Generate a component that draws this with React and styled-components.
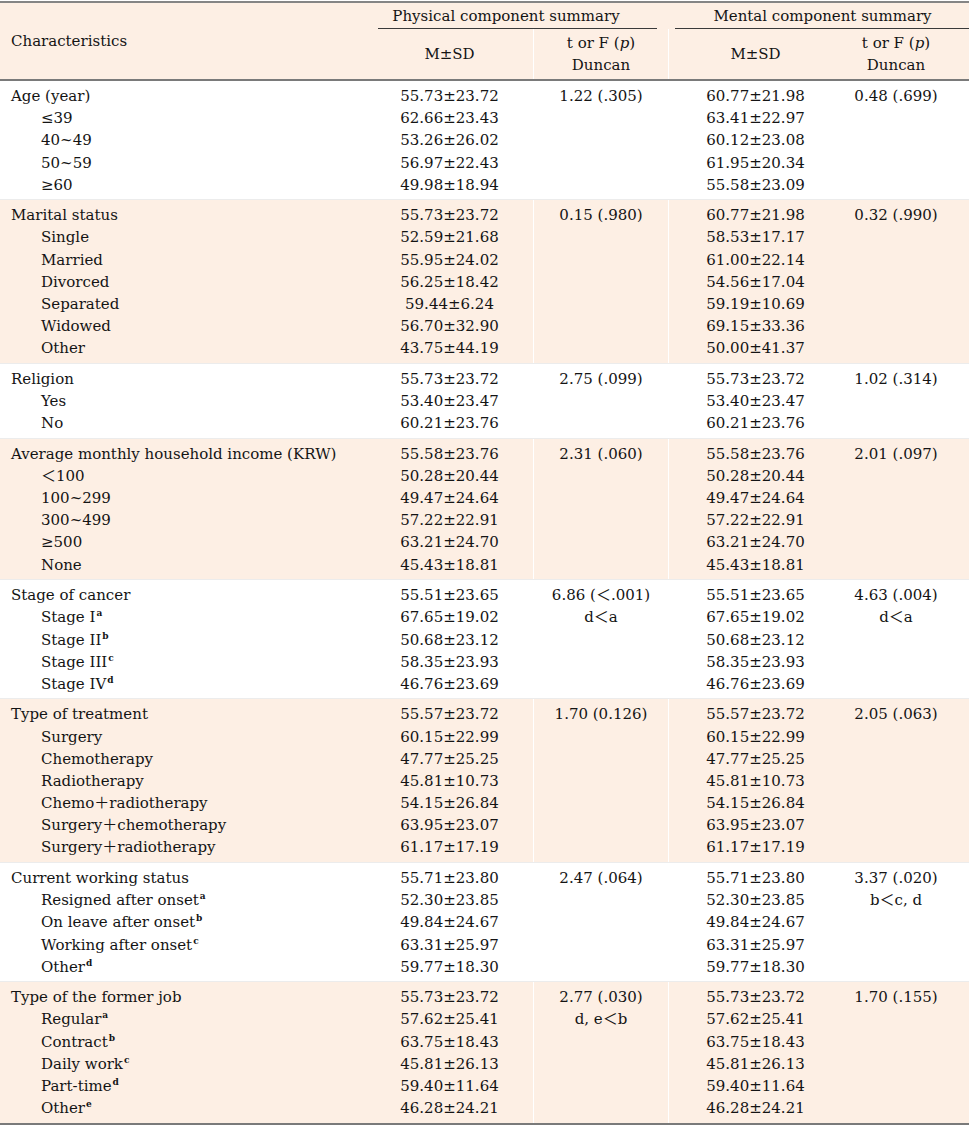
import React from 'react';
import styled, { createGlobalStyle } from "styled-components";

const GlobalStyle = createGlobalStyle`
  body {
    margin: 0;
    background: #ffffff;
    font-family: "DejaVu Serif", "Noto Sans CJK KR", serif;
  }
`

const COLS = '366px 167px 135px 174px 1fr';

const groups = [
  {
    label: 'Age (year)', stats: ['55.73±23.72', '1.22 (.305)', '60.77±21.98', '0.48 (.699)'],
    rows: [
      ['≤39', '62.66±23.43', '', '63.41±22.97', ''],
      ['40~49', '53.26±26.02', '', '60.12±23.08', ''],
      ['50~59', '56.97±22.43', '', '61.95±20.34', ''],
      ['≥60', '49.98±18.94', '', '55.58±23.09', ''],
    ],
  },
  {
    label: 'Marital status', stats: ['55.73±23.72', '0.15 (.980)', '60.77±21.98', '0.32 (.990)'],
    rows: [
      ['Single', '52.59±21.68', '', '58.53±17.17', ''],
      ['Married', '55.95±24.02', '', '61.00±22.14', ''],
      ['Divorced', '56.25±18.42', '', '54.56±17.04', ''],
      ['Separated', '59.44±6.24', '', '59.19±10.69', ''],
      ['Widowed', '56.70±32.90', '', '69.15±33.36', ''],
      ['Other', '43.75±44.19', '', '50.00±41.37', ''],
    ],
  },
  {
    label: 'Religion', stats: ['55.73±23.72', '2.75 (.099)', '55.73±23.72', '1.02 (.314)'],
    rows: [
      ['Yes', '53.40±23.47', '', '53.40±23.47', ''],
      ['No', '60.21±23.76', '', '60.21±23.76', ''],
    ],
  },
  {
    label: 'Average monthly household income (KRW)', stats: ['55.58±23.76', '2.31 (.060)', '55.58±23.76', '2.01 (.097)'],
    rows: [
      ['＜100', '50.28±20.44', '', '50.28±20.44', ''],
      ['100~299', '49.47±24.64', '', '49.47±24.64', ''],
      ['300~499', '57.22±22.91', '', '57.22±22.91', ''],
      ['≥500', '63.21±24.70', '', '63.21±24.70', ''],
      ['None', '45.43±18.81', '', '45.43±18.81', ''],
    ],
  },
  {
    label: 'Stage of cancer', stats: ['55.51±23.65', '6.86 (＜.001)', '55.51±23.65', '4.63 (.004)'],
    rows: [
      ['Stage I', '67.65±19.02', 'd＜a', '67.65±19.02', 'd＜a', 'a'],
      ['Stage II', '50.68±23.12', '', '50.68±23.12', '', 'b'],
      ['Stage III', '58.35±23.93', '', '58.35±23.93', '', 'c'],
      ['Stage IV', '46.76±23.69', '', '46.76±23.69', '', 'd'],
    ],
  },
  {
    label: 'Type of treatment', stats: ['55.57±23.72', '1.70 (0.126)', '55.57±23.72', '2.05 (.063)'],
    rows: [
      ['Surgery', '60.15±22.99', '', '60.15±22.99', ''],
      ['Chemotherapy', '47.77±25.25', '', '47.77±25.25', ''],
      ['Radiotherapy', '45.81±10.73', '', '45.81±10.73', ''],
      ['Chemo＋radiotherapy', '54.15±26.84', '', '54.15±26.84', ''],
      ['Surgery＋chemotherapy', '63.95±23.07', '', '63.95±23.07', ''],
      ['Surgery＋radiotherapy', '61.17±17.19', '', '61.17±17.19', ''],
    ],
  },
  {
    label: 'Current working status', stats: ['55.71±23.80', '2.47 (.064)', '55.71±23.80', '3.37 (.020)'],
    rows: [
      ['Resigned after onset', '52.30±23.85', '', '52.30±23.85', 'b＜c, d', 'a'],
      ['On leave after onset', '49.84±24.67', '', '49.84±24.67', '', 'b'],
      ['Working after onset', '63.31±25.97', '', '63.31±25.97', '', 'c'],
      ['Other', '59.77±18.30', '', '59.77±18.30', '', 'd'],
    ],
  },
  {
    label: 'Type of the former job', stats: ['55.73±23.72', '2.77 (.030)', '55.73±23.72', '1.70 (.155)'],
    rows: [
      ['Regular', '57.62±25.41', 'd, e＜b', '57.62±25.41', '', 'a'],
      ['Contract', '63.75±18.43', '', '63.75±18.43', '', 'b'],
      ['Daily work', '45.81±26.13', '', '45.81±26.13', '', 'c'],
      ['Part-time', '59.40±11.64', '', '59.40±11.64', '', 'd'],
      ['Other', '46.28±24.21', '', '46.28±24.21', '', 'e'],
    ],
  },
];

export default function App() {
  return (
    <>
      <GlobalStyle />
      <Table>
        <Header>
          <HeadLabel>Characteristics</HeadLabel>
          <GroupHead $first>
            <GroupTitle $shift>Physical component summary</GroupTitle>
            <Underline $left={12} $right={11} />
          </GroupHead>
          <GroupHead>
            <GroupTitle>Mental component summary</GroupTitle>
            <Underline $left={7} $right={0} />
          </GroupHead>
          <SubHead><span>M±SD</span></SubHead>
          <SubHead $sep><span>t or F (<i>p</i>)<br />Duncan</span></SubHead>
          <SubHead $sep><span>M±SD</span></SubHead>
          <SubHead $last><span>t or F (<i>p</i>)<br />Duncan</span></SubHead>
        </Header>

        {groups.map((g, gi) => (
          <Group key={g.label} $shaded={gi % 2 === 1} $end={gi === groups.length - 1}>
            <Row>
              <Label>{g.label}</Label>
              <Cell>{g.stats[0]}</Cell>
              <Cell $sep>{g.stats[1]}</Cell>
              <Cell $sep>{g.stats[2]}</Cell>
              <Cell $last>{g.stats[3]}</Cell>
            </Row>
            {g.rows.map((r) => (
              <Row key={r[0]}>
                <Label $sub>{r[0]}{r[5] && <Sup>{r[5]}</Sup>}</Label>
                <Cell>{r[1]}</Cell>
                <Cell $sep>{r[2]}</Cell>
                <Cell $sep>{r[3]}</Cell>
                <Cell $last>{r[4]}</Cell>
              </Row>
            ))}
          </Group>
        ))}
      </Table>
    </>
  )
}

const Table = styled.div`
  width: 969px;
  margin-top: 1px;
  color: #141414;
  font-size: 15px;
  border-top: 2px solid #858585;
  border-bottom: 2px solid #7a7a7a;
`

const Header = styled.div`
  display: grid;
  grid-template-columns: ${COLS};
  grid-template-rows: 26px 50px;
  background: #fdefe4;
  border-bottom: 2px solid #7a7a7a;
`

const HeadLabel = styled.div`
  grid-row: 1 / span 2;
  display: flex;
  align-items: center;
  padding-left: 11px;
`

const GroupHead = styled.div`
  grid-column: ${({ $first }) => ($first ? '2 / span 2' : '4 / span 2')};
  display: flex;
  flex-direction: column;
  justify-content: flex-end;
`

const GroupTitle = styled.div`
  text-align: center;
  line-height: 24px;
  padding-right: ${({ $shift }) => ($shift ? '22px' : '0')};
  padding-left: ${({ $shift }) => ($shift ? '0' : '8px')};
`

const Underline = styled.div`
  height: 1px;
  background: #3a3a3a;
  margin-left: ${({ $left }) => $left}px;
  margin-right: ${({ $right }) => $right}px;
`

const SubHead = styled.div`
  display: flex;
  align-items: center;
  justify-content: center;
  text-align: center;
  line-height: 22px;
  border-left: ${({ $sep }) => ($sep ? '1px solid #ffffff' : 'none')};
  padding-right: ${({ $last }) => ($last ? '19px' : '0')};
`

const Group = styled.div`
  background: ${({ $shaded }) => ($shaded ? '#fdefe4' : '#ffffff')};
  border-bottom: ${({ $end }) => ($end ? 'none' : '1px solid #ececec')};
`

const Row = styled.div`
  display: grid;
  grid-template-columns: ${COLS};
  line-height: 22.17px;

  &:first-child > div { padding-top: 4px; }
  &:last-child > div { padding-bottom: 3.4px; }
`

const Label = styled.div`
  padding-left: ${({ $sub }) => ($sub ? '41px' : '11px')};
  white-space: nowrap;
`

const Cell = styled.div`
  text-align: center;
  white-space: nowrap;
  border-left: ${({ $sep }) => ($sep ? '1px solid #ffffff' : 'none')};
  padding-right: ${({ $last }) => ($last ? '19px' : '0')};
`

const Sup = styled.sup`
  font-size: 9px;
  font-weight: bold;
  line-height: 0;
  vertical-align: 6px;
  margin-left: 1px;
`
